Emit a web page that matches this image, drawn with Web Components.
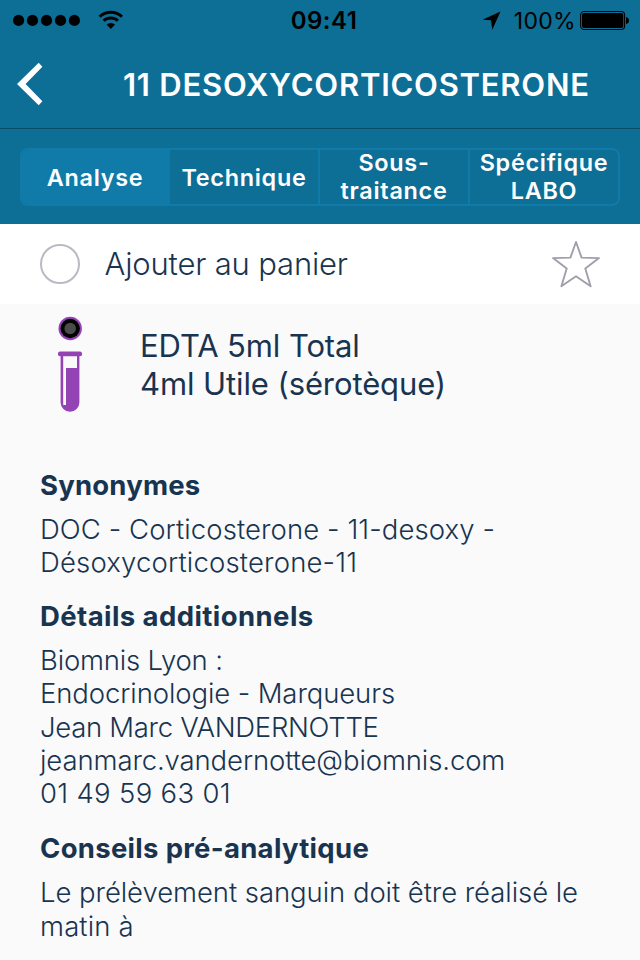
<!DOCTYPE html>
<html lang="fr">
<head>
<meta charset="utf-8">
<title>11 DESOXYCORTICOSTERONE</title>
<style>
html,body{margin:0;background:#fafafa}
body{width:640px;height:960px;overflow:hidden;font-family:Inter,"Liberation Sans",sans-serif;color:#183450}
</style>
</head>
<body>
<analysis-page></analysis-page>
<script>
const define = (name, html) => {
  const t = document.createElement('template');
  t.innerHTML = html;
  customElements.define(name, class extends HTMLElement {
    constructor() {
      super();
      this.attachShadow({ mode: 'open' }).append(t.content.cloneNode(true));
    }
  });
};

define('text-line', `<style>:host{display:block;white-space:nowrap}</style><slot></slot>`);

define('status-bar', `
<style>
:host{display:grid;grid-template-columns:1fr auto 1fr;align-items:center;height:40px;color:#000;padding:0 11px 0 13px;line-height:28px}
.l,.r{display:flex;align-items:center}
.r{justify-content:flex-end}
svg{display:block}
.time{font-weight:600;font-size:24px;letter-spacing:.5px;padding:2px 0 0 6px}
.pct{font-size:23px;letter-spacing:.3px;margin:2px 4px 0 12px}
.l svg+svg{margin-left:17.5px}
</style>
<div class="l">
<svg width="67" height="12"><g><circle cx="5.6" cy="6.4" r="5.6"/><circle cx="19.5" cy="6.4" r="5.6"/><circle cx="33.5" cy="6.4" r="5.6"/><circle cx="47.5" cy="6.4" r="5.6"/><circle cx="61.4" cy="6.4" r="5.6"/></g></svg>
<svg width="26" height="20" viewBox="0 0 26 20"><g fill="none" stroke="#000" stroke-width="2.9"><path d="M1.6 6.7A16.2 16.2 0 0 1 24 6.7"/><path d="M5.6 10.8A10.5 10.5 0 0 1 20 10.8"/></g><path d="M12.8 19L8.6 14.6A6 6 0 0 1 17 14.6Z"/></svg>
</div>
<div class="time">09:41</div>
<div class="r">
<svg width="19" height="20" viewBox="0 0 19 20"><path d="M17.5 1.5L-.5 9.6L8 10.2L9.3 19.8Z"/></svg>
<div class="pct">100%</div>
<svg width="49" height="20" viewBox="0 0 49 20"><rect x=".6" y="1.5" width="44" height="18" rx="3.5" fill="none" stroke="#000" stroke-width="1.1"/><rect x="2" y="3" width="41.3" height="15" rx="2"/><path d="M46 7Q49 7.5 49 10.5T46 14Z"/></svg>
</div>`);

define('nav-bar', `
<style>
:host{display:flex;align-items:center;height:88px;border-bottom:1px solid #0b4b6a;color:#fff;padding-left:17px}
svg{display:block;flex:none}
h1{margin:1px 0 0 80px;font-size:31px;line-height:38px;font-weight:600;letter-spacing:.76px;white-space:nowrap}
</style>
<svg width="26" height="44" viewBox="0 0 26 44"><path fill="#fff" d="M21.7.8L25.4 4.7 8.6 22 25.4 39.3 21.7 43.2 0 22Z"/></svg>
<h1><slot></slot></h1>`);

define('tab-item', `
<style>
:host{display:flex;align-items:center;justify-content:center;box-sizing:border-box;text-align:center;white-space:pre-line;font-size:23.4px;font-weight:600;line-height:28px;letter-spacing:.72px;border-right:2px solid #107ba8;padding-top:2px}
:host([active]){background:#107ba8;border-radius:6px 0 0 6px}
:host([two-line]){padding-top:0}
:host(:last-child){border-right:0}
</style>
<span><slot></slot></span>`);

define('tab-strip', `
<style>
:host{display:grid;grid-template-columns:148px 150px 150px 1fr;grid-template-rows:54px;box-sizing:border-box;height:58px;margin:19px 20px 18px;border:2px solid #107ba8;border-radius:8px;color:#fff}
</style>
<slot></slot>`);

define('cart-row', `
<style>
:host{display:flex;align-items:center;height:80px;background:#fff;padding:0 39px 0 40px;font-size:31px;font-weight:300;letter-spacing:-.17px}
i{box-sizing:border-box;width:40px;height:40px;border:2px solid #bbb9c3;border-radius:50%}
span{flex:1;margin-left:24.5px;padding-bottom:2px}
svg{display:block}
</style>
<i></i><span><slot></slot></span>
<svg width="50" height="50" viewBox="0 0 50 50"><path d="M25 3L30.6 18.6 48 19.1 34.3 29.6 39.6 47.3 25 37.3 10.4 47.3 15.7 29.6 2 19.1 19.4 18.6Z" fill="none" stroke="#a19fab" stroke-width="1.9" stroke-linejoin="round"/></svg>`);

define('sample-tube', `
<style>
:host{display:flex;align-items:flex-start;height:164px;padding:0 0 0 57px;box-sizing:border-box}
svg{display:block;margin-top:12px}
div{margin:23px 0 0 57px;font-size:31px;line-height:38px;letter-spacing:-.1px}
</style>
<svg width="26" height="98" viewBox="0 0 26 98">
<circle cx="13.2" cy="12.5" r="11.7" fill="#9443b5"/><circle cx="13.2" cy="12.5" r="9.7"/><circle cx="13.2" cy="12.5" r="5.8" fill="#4b4b4b"/>
<rect x="1" y="35.6" width="24" height="4.6" rx="2" fill="#9443b5"/>
<path d="M3.6 39V86.4A9.4 9.4 0 0 0 22.4 86.4V39Z" fill="#9443b5"/>
<path d="M6.2 40.2H20V52H9V89H6.2Z" fill="#fafafa"/>
</svg>
<div><slot></slot></div>`);

define('info-section', `
<style>
:host{display:block;margin:0 0 19.7px 40px}
h2{margin:0 0 var(--gap,10.9px);font-size:27.5px;line-height:34px;font-weight:700;white-space:nowrap}
div{font-size:27.5px;line-height:33.35px;font-weight:300}
</style>
<h2><slot name="title"></slot></h2><div><slot></slot></div>`);

define('analysis-page', `
<style>
:host{display:block}
header{background:#0d6e96;display:flow-root;height:224px}
</style>
<header>
<status-bar></status-bar>
<nav-bar>11 DESOXYCORTICOSTERONE</nav-bar>
<tab-strip><tab-item active>Analyse</tab-item><tab-item>Technique</tab-item><tab-item two-line>Sous-
traitance</tab-item><tab-item two-line>Spécifique
LABO</tab-item></tab-strip>
</header>
<cart-row>Ajouter au panier</cart-row>
<sample-tube><text-line>EDTA 5ml Total</text-line><text-line>4ml Utile (sérotèque)</text-line></sample-tube>
<info-section><span slot="title" style="letter-spacing:.2px">Synonymes</span>
<text-line style="letter-spacing:.09px">DOC - Corticosterone - 11-desoxy -</text-line>
<text-line style="letter-spacing:.17px">Désoxycorticosterone-11</text-line></info-section>
<info-section style="--gap:10.68px;margin-bottom:19.92px"><span slot="title" style="letter-spacing:.42px">Détails additionnels</span>
<text-line style="letter-spacing:-.2px">Biomnis Lyon :</text-line>
<text-line style="letter-spacing:-.1px">Endocrinologie - Marqueurs</text-line>
<text-line style="letter-spacing:-.3px">Jean Marc VANDERNOTTE</text-line>
<text-line style="letter-spacing:-.11px">jeanmarc.vandernotte@biomnis.com</text-line>
<text-line style="letter-spacing:.32px">01 49 59 63 01</text-line></info-section>
<info-section style="--gap:11.6px"><span slot="title" style="letter-spacing:.3px">Conseils pré-analytique</span>
<text-line style="letter-spacing:-.06px">Le prélèvement sanguin doit être réalisé le</text-line>
<text-line style="letter-spacing:.13px">matin à</text-line></info-section>`);
</script>
</body>
</html>
